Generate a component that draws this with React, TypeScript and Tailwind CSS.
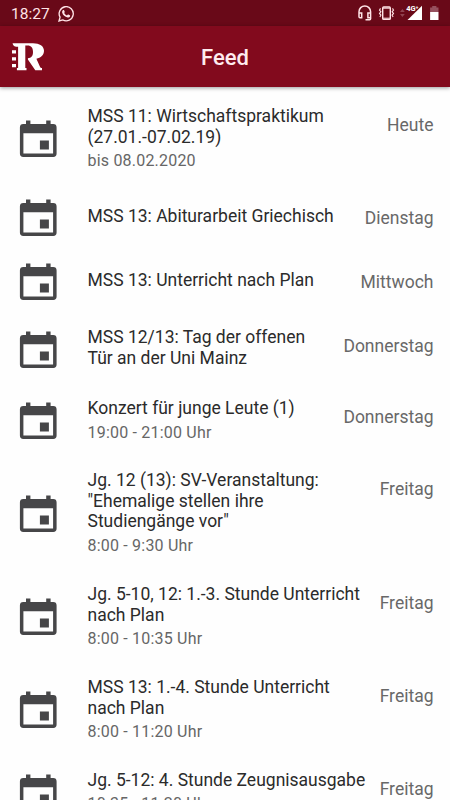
import React from 'react';

type Item = { lines: string[]; time?: string; day: string; height: string };

const items: Item[] = [
  { lines: ['MSS 11: Wirtschaftspraktikum', '(27.01.-07.02.19)'], time: 'bis 08.02.2020', day: 'Heute', height: 'h-[93px]' },
  { lines: ['MSS 13: Abiturarbeit Griechisch'], day: 'Dienstag', height: 'h-16' },
  { lines: ['MSS 13: Unterricht nach Plan'], day: 'Mittwoch', height: 'h-16' },
  { lines: ['MSS 12/13: Tag der offenen', 'Tür an der Uni Mainz'], day: 'Donnerstag', height: 'h-[71.5px]' },
  { lines: ['Konzert für junge Leute (1)'], time: '19:00 - 21:00 Uhr', day: 'Donnerstag', height: 'h-[71.5px]' },
  { lines: ['Jg. 12 (13): SV-Veranstaltung:', '"Ehemalige stellen ihre', 'Studiengänge vor"'], time: '8:00 - 9:30 Uhr', day: 'Freitag', height: 'h-[114px]' },
  { lines: ['Jg. 5-10, 12: 1.-3. Stunde Unterricht', 'nach Plan'], time: '8:00 - 10:35 Uhr', day: 'Freitag', height: 'h-[93px]' },
  { lines: ['MSS 13: 1.-4. Stunde Unterricht', 'nach Plan'], time: '8:00 - 11:20 Uhr', day: 'Freitag', height: 'h-[93px]' },
  { lines: ['Jg. 5-12: 4. Stunde Zeugnisausgabe'], time: '10:35 - 11:20 Uhr', day: 'Freitag', height: 'h-[72px]' },
];

function CalendarIcon() {
  return (
    <svg className="mb-[1.5px] h-[38px] w-[38px] shrink-0" viewBox="0 0 38 38" fill="#464648">
      <path fillRule="evenodd" d="M7 .5h4.4V4h15.8V.5h4.4V4h2.6A3.4 3.4 0 0 1 37.6 7.4v26.2a3.4 3.4 0 0 1-3.4 3.4H4.3a3.4 3.4 0 0 1-3.4-3.4V7.4A3.4 3.4 0 0 1 4.3 4H7ZM4.4 13.2v20.3h29.7V13.2Z" />
      <path d="M20.9 20.5h9v9h-9z" />
    </svg>
  );
}

function Row({ item }: { item: Item }) {
  const single = item.lines.length === 1 && !item.time;
  return (
    <li className={`flex shrink-0 pl-[19px] pr-[16.5px] ${item.height}`}>
      <div className="flex w-[68.5px] shrink-0 items-center">
        <CalendarIcon />
      </div>
      <div className={`min-w-0 flex-1 whitespace-nowrap ${single ? 'pt-[19px]' : 'pt-[12.4px]'}`}>
        <div className="text-[17.5px] leading-[20.75px] text-[#2b2b2b]">
          {item.lines.map((line) => (
            <div key={line}>{line}</div>
          ))}
        </div>
        {item.time && <div className="mt-[3.4px] text-[16px] leading-5 tracking-[0.2px] text-[#666]">{item.time}</div>}
      </div>
      <div className="pt-[20.4px] text-[17.5px] leading-[22px] text-[#686868]">{item.day}</div>
    </li>
  );
}

function StatusBar() {
  return (
    <div className="flex h-[26px] shrink-0 items-center bg-[#690918] text-[#ffe3e6]">
      <span className="w-[46px] shrink-0 pl-[11px] pt-px text-[15.5px] leading-5">18:27</span>
      <svg className="ml-3 mt-px h-4 w-4" viewBox="0 0 24 24" fill="none" stroke="currentColor" strokeWidth="2">
        <path d="m1.5 22.5 1.6-5.7a10.6 10.6 0 1 1 4 4Z" />
        <path fill="currentColor" stroke="none" d="M7.3 6.4c.5-.5 1.5-.6 1.8.1l1 2.3c.2.5-.2 1-.8 1.7.9 1.8 2.2 3 4.1 3.8l1.1-1.3c.3-.4.7-.4 1.1-.2l2.1 1c.7.4.5 1.2.2 1.9-.5 1.2-2.1 1.9-3.4 1.6-4.2-1-7.1-3.5-8.2-7.1-.4-1.4 0-2.9 1-3.8Z" />
      </svg>
      <svg className="ml-auto h-[26px] w-[110px]" viewBox="0 0 110 26" fill="none" stroke="currentColor">
        <path strokeWidth="1.5" d="M19 14v-2.3a5.8 5.8 0 0 1 11.6 0v7.1q0 1-1 1H25.5M19 13h2.7v4.8H20q-1 0-1-1ZM30.6 13h-2.7v4.8h2.7" />
        <rect x="42.7" y="7" width="7.6" height="12.4" rx="1" strokeWidth="1.4" />
        <path strokeWidth="1" d="M43 8.2h7M43 18.2h7" />
        <path strokeWidth="1.1" d="m40.5 8.4-1 1.7 1.4 1.6-1.4 1.7 1.4 1.7-1 1.8M52.5 8.4l1 1.7-1.4 1.6 1.4 1.7-1.4 1.7 1 1.8" />
        <path fill="#8f4350" stroke="none" d="m60 12 2.4-3 2.4 3Zm0 2 2.4 3 2.4-3Z" />
        <path fill="#fff" stroke="none" d="M82 5.7V20H67.5Z" />
        <text x="66.2" y="10.6" fill="#fff" stroke="#690918" strokeWidth="1" paintOrder="stroke" fontSize="7.5" fontWeight="700">4G⁺</text>
        <path fill="#96505e" stroke="none" d="M92.2 6h4.2v1.4h2.1V12h-8.4V7.4h2.1Z" />
        <path fill="#fff" stroke="none" d="M90.1 12h8.4v8h-8.4z" />
      </svg>
    </div>
  );
}

function Logo() {
  return (
    <svg className="h-[30px] w-[34px]" viewBox="0 0 34 30" fill="#fff">
      <path fillRule="evenodd" d="M1.6 1.2H22c6.6 0 11 2.8 11 7.6 0 4.4-3.3 7.2-7.6 7.9l3.7 8.3c.4.7.9 1 1.9 1v2.3h-6.7L16.9 17.4v-1.2c3.4 0 5.1-2.1 5.1-6.1 0-4.3-1.7-6.6-5.5-6.6h-2.2V26h1.2v2.3H5.9V26h1.2V4.8C4.4 4.8 2 4.1 1.6 1.2Z" />
      <path d="M1 8.3h4v3.2H1zM1 15.2h4v3.2H1zM1 22h4v3.2H1z" />
    </svg>
  );
}

export default function App() {
  return (
    <main className="flex h-[800px] w-[450px] flex-col overflow-hidden bg-[#fefefe] font-['Roboto',sans-serif]">
      <StatusBar />
      <header className="z-10 grid h-[61px] shrink-0 grid-cols-[1fr_auto_1fr] items-center bg-[#820a1d] shadow-[0_1px_4px_rgba(0,0,0,0.4)]">
        <div className="pl-[11px]"><Logo /></div>
        <h1 className="pt-[2px] text-[22px] font-medium leading-7 text-[#ffecef]">Feed</h1>
      </header>
      <ul className="flex min-h-0 flex-1 flex-col overflow-hidden pt-[6.5px]">
        {items.map((item) => <Row key={item.lines[0]} item={item} />)}
      </ul>
    </main>
  );
}
